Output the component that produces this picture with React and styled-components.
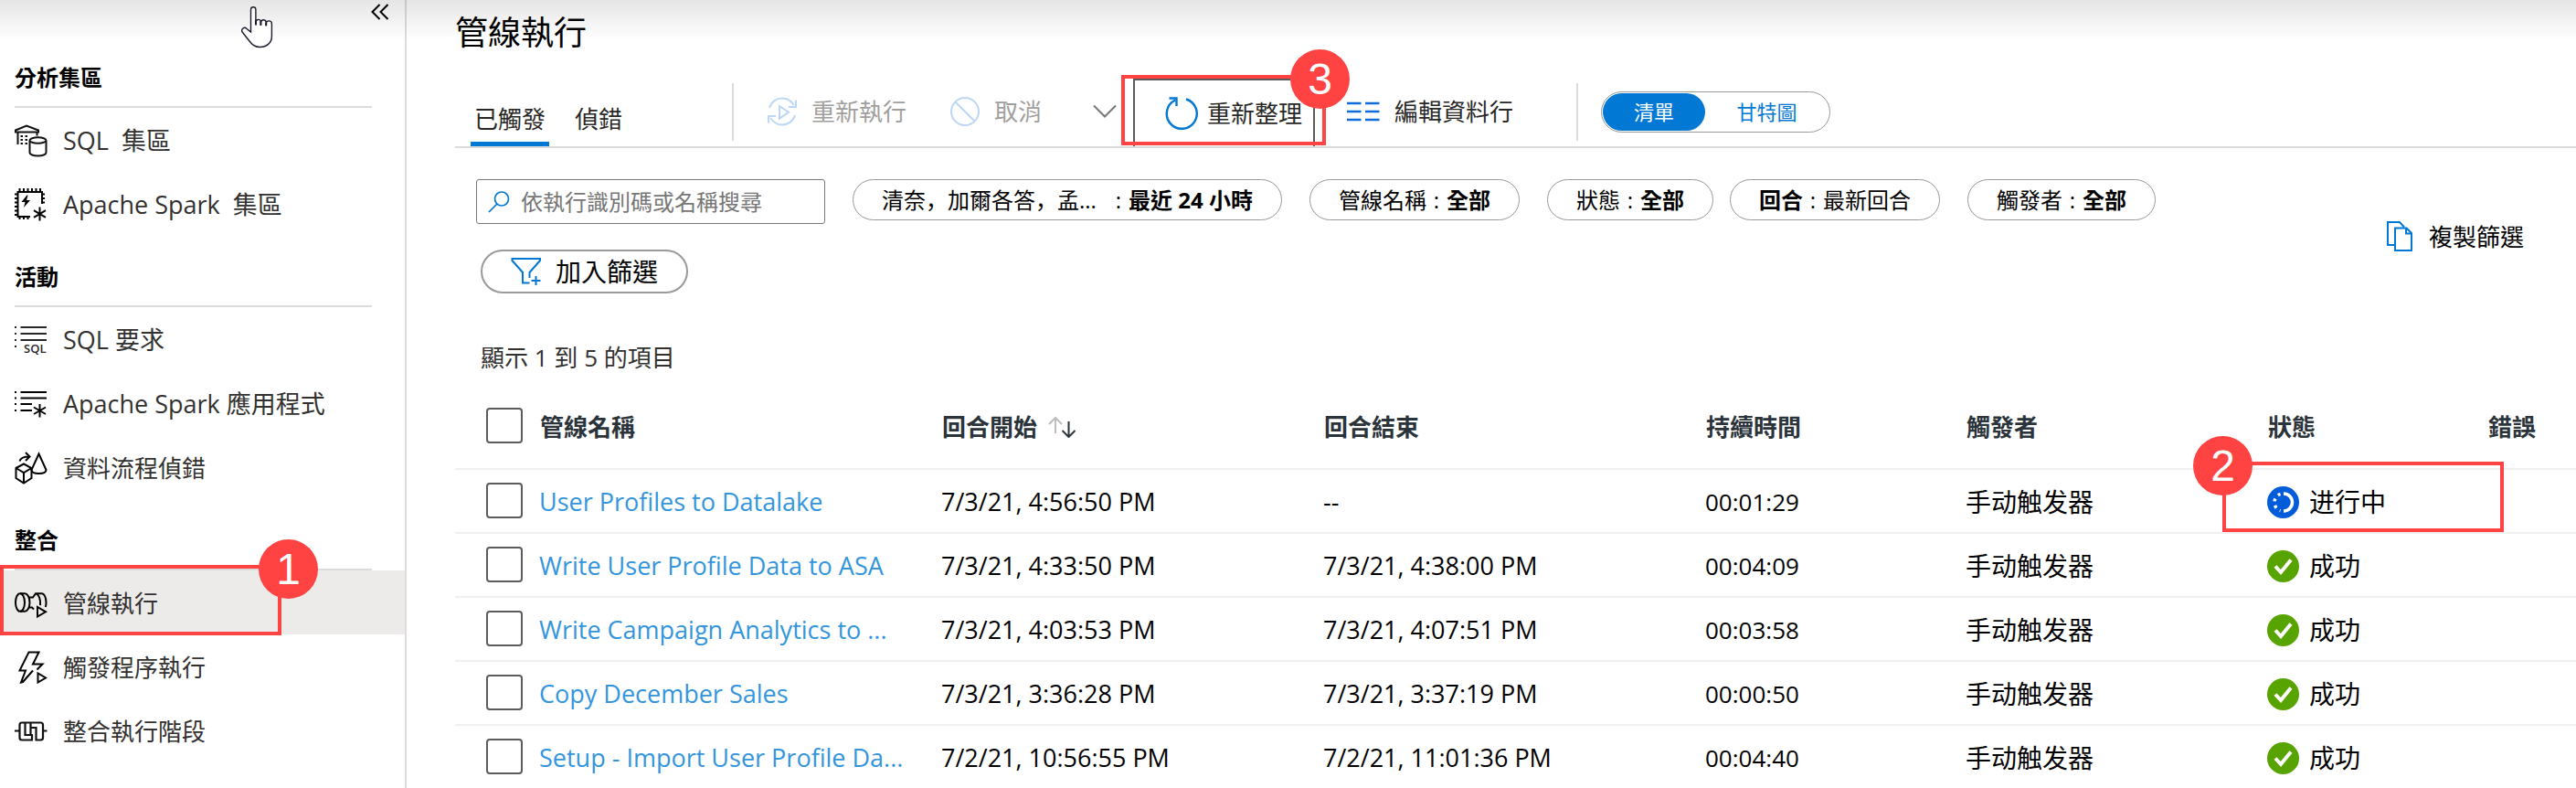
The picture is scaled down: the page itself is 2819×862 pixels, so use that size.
import React from "react";
import styled, { createGlobalStyle, css } from "styled-components";

const GlobalStyle = createGlobalStyle`
  *, *::before, *::after { box-sizing: border-box; }
  body {
    margin: 0;
    background: #fff;
    color: #000;
    font-family: "Open Sans", "Noto Sans CJK TC", sans-serif;
    font-size: 26px;
    line-height: 34px;
  }
  button, input { font: inherit; color: inherit; }
  button { padding: 0; border: 0; background: none; cursor: pointer; white-space: nowrap; }
  a { text-decoration: none; }
  svg { display: block; flex: none; }
`;

const Page = styled.div`
  position: relative;
  display: flex;
  height: 100vh;
  overflow: hidden;
`;

const TopShade = styled.div`
  position: absolute;
  inset: 0 0 auto 0;
  height: 44px;
  background: linear-gradient(rgba(0, 0, 0, 0.1), rgba(0, 0, 0, 0));
  pointer-events: none;
`;

const Pointer = styled.svg`
  position: absolute;
  left: 264px;
  top: 5px;
  pointer-events: none;
`;

/* Sidebar */

const Sidebar = styled.nav`
  flex: none;
  width: 445px;
  border-right: 2px solid #dcdcdc;
`;

const SidebarTop = styled.div`
  display: flex;
  justify-content: flex-end;
  align-items: flex-start;
  height: 40px;
  padding: 4px 17px 0 0;
`;

const SectionTitle = styled.h2`
  margin: 0 36px 0 16px;
  padding: 28px 0 14px;
  border-bottom: 2px solid #dcdcdc;
  font-size: 24px;
  line-height: 34px;
  font-weight: 700;
`;

const NavList = styled.ul`
  margin: 0;
  padding: 0;
  list-style: none;
`;

const NavItem = styled.li`
  position: relative;
`;

const NavLink = styled.a`
  display: flex;
  align-items: center;
  gap: 17px;
  height: 70px;
  padding: 2px 0 0 16px;
  color: #323130;
  font-size: ${(p) => (p.$latin ? 27 : 26)}px;
  white-space: pre;
  background: ${(p) => (p.$active ? "#edebe9" : "transparent")};
`;

/* Numbered callouts */

const Callout = styled.div`
  position: absolute;
  z-index: 2;
  height: 77px;
  border: 4px solid #ff4343;
  pointer-events: none;
  ${(p) => p.$box}
`;

const badgeSides = {
  left: "left: -36px;",
  right: "right: -44px;",
  corner: "right: -30px;",
};

const Badge = styled.span`
  position: absolute;
  top: -32px;
  ${(p) => badgeSides[p.$side]}
  width: 65px;
  height: 65px;
  border-radius: 50%;
  background: #ff4343;
  color: #fff;
  font-family: "Liberation Sans", sans-serif;
  font-size: 48px;
  font-weight: 400;
  line-height: 65px;
  text-align: center;
`;

/* Main column */

const Main = styled.main`
  flex: 1;
  min-width: 0;
  padding-left: 53px;
`;

const Title = styled.h1`
  margin: 0;
  padding-top: 14px;
  font-size: 36px;
  line-height: 44px;
  font-weight: 400;
`;

const Toolbar = styled.div`
  display: flex;
  align-items: center;
  height: 78px;
  margin-top: 26px;
  border-bottom: 2px solid #dcdcdc;
`;

const Tabs = styled.div`
  display: flex;
  align-self: flex-end;
  gap: 24px;
  width: 303px;
  padding-left: 17px;
`;

const Tab = styled.button`
  height: 56px;
  padding: 0 4px;
  border-bottom: 5px solid ${(p) => (p.$active ? "#0078d4" : "transparent")};
  color: #292827;
  line-height: 46px;
`;

const Separator = styled.span`
  flex: none;
  width: 2px;
  height: 63px;
  background: #dcdcdc;
`;

const ToolGroup = styled.div`
  display: flex;
  align-items: center;
  gap: ${(p) => p.$gap}px;
  padding: 0 ${(p) => p.$right}px 0 ${(p) => p.$left}px;
`;

const ToolButton = styled.button`
  display: flex;
  align-items: center;
  gap: 16px;
  color: #292827;
  &:disabled { color: #a19f9d; cursor: default; }
`;

const RefreshWrap = styled.div`
  position: relative;
  align-self: stretch;
  margin-left: 18px;
  padding-top: 2px;
`;

const RefreshButton = styled(ToolButton)`
  gap: 10px;
  height: 100%;
  padding: 0 12px 0 33px;
  border: 2px solid #5c5c5c;
  border-bottom: 0;
`;

const Switcher = styled.div`
  display: flex;
  width: 251px;
  height: 45px;
  margin-left: 25px;
  padding: 1px;
  border: 1px solid #999;
  border-radius: 23px;
  color: #0078d4;
  font-size: 22px;
`;

const SwitchOption = styled.button`
  flex: ${(p) => (p.$active ? "0 0 112px" : "1")};
  border-radius: 21px;
  ${(p) => p.$active && css`
    background: #0078d4;
    color: #fff;
  `}
`;

const Filters = styled.section`
  display: flex;
  align-items: center;
  justify-content: space-between;
  padding: 34px 57px 0 23px;
`;

const FilterRows = styled.div`
  display: flex;
  flex-direction: column;
  align-items: flex-start;
  gap: 28px;
`;

const FilterRow = styled.div`
  display: flex;
  align-items: flex-start;
  gap: ${(p) => p.$gap || 30}px;
`;

const SearchBox = styled.label`
  display: flex;
  align-items: center;
  gap: 12px;
  width: 382px;
  height: 49px;
  padding: 0 12px;
  border: 1px solid #767676;
  border-radius: 3px;
`;

const SearchInput = styled.input`
  flex: 1;
  min-width: 0;
  padding: 0;
  border: 0;
  outline: 0;
  background: transparent;
  font-size: 24px;
  &::placeholder { color: #767676; opacity: 1; }
`;

const Pill = styled.button`
  display: flex;
  align-items: center;
  height: 45px;
  padding: 0 31px;
  border: 1px solid #999;
  border-radius: 23px;
  font-size: 24px;
`;

const PillText = styled.span`
  font-weight: ${(p) => (p.$bold ? 700 : 400)};
`;

const PillLocations = styled(PillText)`
  width: 248px;
  font-family: "Open Sans", "Noto Sans CJK SC", sans-serif;
  text-align: left;
`;

const Colon = styled.span`
  width: 22px;
  text-align: center;
`;

const AddFilter = styled.button`
  display: flex;
  align-items: center;
  gap: 15px;
  height: 48px;
  margin-left: 5px;
  padding: 0 31px;
  border: 2px solid #999;
  border-radius: 24px;
  font-size: 28px;
`;

const CopyFilters = styled(ToolButton)`
  gap: 18px;
  color: #000;
`;

const Count = styled.p`
  margin: 53px 0 12px;
  padding-left: 28px;
  color: #323130;
`;

/* Runs table */

const Table = styled.table`
  width: 100%;
  table-layout: fixed;
  border-collapse: separate;
  border-spacing: 0;
`;

const Col = styled.col`
  width: ${(p) => (p.$w ? `${p.$w}px` : "auto")};
`;

const Th = styled.th`
  height: 94px;
  padding: ${(p) => (p.$check ? "0 0 2px 34px" : "2px 0 0 1px")};
  border-bottom: 2px solid #f0f0f0;
  color: #2b333b;
  font-weight: 700;
  text-align: left;
  white-space: nowrap;
`;

const Td = styled.td`
  position: relative;
  height: 70px;
  padding: ${(p) => (p.$check ? "0 0 2px 34px" : "2px 0 0")};
  border-bottom: 2px solid #f0f0f0;
  font-size: ${(p) => (p.$compact ? 26 : 27)}px;
  white-space: nowrap;
`;

const TriggerTd = styled(Td)`
  font-family: "Open Sans", "Noto Sans CJK SC", sans-serif;
  font-size: 28px;
`;

const HeadInner = styled.span`
  display: flex;
  align-items: center;
  gap: 12px;
`;

const Status = styled.span`
  display: flex;
  align-items: center;
  gap: 11px;
`;

const Check = styled.input`
  appearance: none;
  display: block;
  width: 40px;
  height: 39px;
  margin: 0;
  border: 2px solid #5c5c5c;
  border-radius: 4px;
  background: #fff;
`;

const RunLink = styled.a`
  color: #3395dd;
`;

/* Icons */

const Svg = ({ w = 36, h = 36, box, color = "#111", sw = 2, children }) => (
  <svg width={w} height={h} viewBox={box || `0 0 ${w} ${h}`} fill="none" stroke={color} strokeWidth={sw} aria-hidden="true">
    {children}
  </svg>
);

const icons = {
  sqlPool: (
    <Svg>
      <path d="M1 8.500V6.500L13 1.500l13 5v2zM3.500 8.500V22M24.500 8.500v4" />
      <path d="M6.500 13h2.500M11.500 13H14M6.500 17h2.500M11.500 17H14M6.500 21h2.500M11.500 21H14" strokeWidth="2.200" />
      <path d="M16.500 18v13c0 2 4 3.500 9 3.500s9-1.500 9-3.500V18" fill="#fff" />
      <ellipse cx="25.500" cy="17.500" rx="9" ry="3.200" fill="#fff" />
    </Svg>
  ),
  sparkPool: (
    <Svg color="#000">
      <path d="M17 31H3.500V4H30v13" />
      <path d="M5.500 0v4M10 0v4M14.500 0v4M19 0v4M23.500 0v4M28 0v4M30 6.500h3M30 11h3M30 15.500h3M0 6.500h3M0 11h3M0 15.500h3M0 20h3M0 24.500h3M0 29h3M5.500 31v3M10 31v3M14.500 31v3" />
      <path d="M13.500 7.500L7.500 15h4l-1.500 6 7-8h-4l1.500-5.500z" fill="#000" stroke="none" />
      <path d="M27.500 20.500v15M21 24.200l13 7.600M21 31.800l13-7.600" />
    </Svg>
  ),
  sqlRequests: (
    <Svg color="#292827">
      <path d="M0 4h2M0 11h2M0 18h2M0 25h2M6.500 4H35M6.500 11H35M6.500 18H35" />
      <text x="10" y="31.500" fontSize="13" fontWeight="600" fontFamily="Open Sans, sans-serif" fill="#292827" stroke="none">SQL</text>
    </Svg>
  ),
  sparkApps: (
    <Svg color="#000">
      <path d="M0 5h2M0 11.500h2M0 18h2M0 25h2M6.500 5H35M6.500 11.500H35M6.500 18H19M6.500 25H19" />
      <path d="M27.500 18v14.500M21 21.500l13 7.500M21 29l13-7.500" />
    </Svg>
  ),
  dataFlow: (
    <Svg color="#000">
      <path d="M1.500 18l8.500-4.500 8.500 4.500v11L10 34.500 1.500 29zM1.500 18l8.500 5 8.500-5M10 23v11" />
      <path d="M26.500 2.500L34.500 20c0 2.500-3.500 4-8 4s-8-1.500-8-4z" />
      <path d="M5.500 10.500C6.500 6.500 10 5.500 16 5.500M12 1l4.500 4.500L12 10" />
    </Svg>
  ),
  pipelineRuns: (
    <Svg color="#000">
      <ellipse cx="6" cy="17" rx="5" ry="9.800" />
      <path d="M6 7.200h5c3 0 5.500 4 5.500 9.800s-2.500 9.800-5.500 9.800H6" />
      <path d="M15.500 11.500H20l3-4.300h6.500c3 0 5 4.500 5 9.800 0 1.800-.2 3.500-.7 5M15.500 22.500H19l2 2M23.500 7.200c3.500 2 5 7 4.500 13" />
      <path d="M25 22v10.500l9-5.200z" />
    </Svg>
  ),
  triggerRuns: (
    <Svg color="#000">
      <path d="M20 21.500L9 34l-2 .5 5-13H5.500L15.500 1.500h11l-6.500 13h10.500l-6 6" />
      <path d="M25.500 24.500v10l8.500-5z" />
    </Svg>
  ),
  runtimes: (
    <Svg color="#111" sw={2.200}>
      <path d="M0 17.500h5M31 17.500h4.500" />
      <path d="M17.500 8.500H8Q5.500 8.500 5.500 11v14q0 2.500 2.500 2.500h11V22H11.500V8.500M17.500 8.500h11Q31 8.500 31 11v14q0 2.500-2.500 2.500H23.500V14H17.500v8M17.500 8.500V14" />
    </Svg>
  ),
  rerun: (
    <Svg w={32} h={32} color="#bcd6f5">
      <path d="M2 12C4 5 10 1.500 16 1.500c5 0 9.500 2.500 13 7.500M31 3.500V11h-8M30 20c-2 7-8 10.500-14 10.500-5 0-9.500-2.500-13-7.500M1 28.500V21h8" />
      <path d="M13 10v13.500l10-6.800z" />
    </Svg>
  ),
  cancel: (
    <Svg w={32} h={32} color="#bcd6f5">
      <circle cx="16" cy="16" r="15" />
      <path d="M5.500 5.500l21 21" />
    </Svg>
  ),
  chevron: (
    <Svg w={26} h={16} color="#777">
      <path d="M1 1.500l12 12 12-12" />
    </Svg>
  ),
  refresh: (
    <Svg color="#0078d4" sw={2.400}>
      <path d="M23 2.500A16.500 16.500 0 1 1 11 3.500M4.500 1.500H12.500V10" />
    </Svg>
  ),
  columns: (
    <Svg w={36} h={24} color="#0f6cda" sw={2.600}>
      <path d="M0 3h15.500M20 3h15.500M0 12h15.500M20 12h15.500M0 21h15.500M20 21h15.500" />
    </Svg>
  ),
  search: (
    <Svg w={24} h={24} color="#0078d4" sw={1.700}>
      <circle cx="15" cy="8.500" r="7.500" />
      <path d="M10 14L1 23" />
    </Svg>
  ),
  addFilter: (
    <Svg w={34} h={32} color="#0078d4">
      <path d="M20.500 28.500H13V17L1.500 4V2H32v2L20.500 17v6" />
      <path d="M27.500 21v10M22.500 26h10" />
    </Svg>
  ),
  copy: (
    <Svg w={28} h={33} color="#0078d4">
      <path d="M9 26H1V1h13l5 5.500" />
      <path d="M9 7.500h12.500L27 13v19H9zM21 7.500v6h6" />
    </Svg>
  ),
  sort: (
    <Svg w={32} h={24} color="#2b333b">
      <path d="M8 19V2M1 9l7-7 7 7" stroke="#bdbdbd" />
      <path d="M22.500 6v17M15.500 16l7 7 7-7" />
    </Svg>
  ),
  collapse: (
    <Svg w={20} h={18} color="#000">
      <path d="M9.500 1L1.500 9l8 8M18.500 1l-8 8 8 8" />
    </Svg>
  ),
  running: (
    <Svg w={35} h={35} color="#fff" sw={3.500}>
      <circle cx="17.500" cy="17.500" r="17.500" fill="#015cda" stroke="none" />
      <path d="M18 8a9.500 9.500 0 0 1 0 19" />
      <path d="M14.500 8.400A9.500 9.500 0 0 0 8 17.500a9.500 9.500 0 0 0 6.500 9.100" strokeDasharray="3 4.600" />
    </Svg>
  ),
  success: (
    <Svg w={35} h={35} color="#fff" sw={4}>
      <circle cx="17.500" cy="17.500" r="17.500" fill="#57a300" stroke="none" />
      <path d="M9 17.500l6 6.500L26 10.500" />
    </Svg>
  ),
};

const sections = [
  { title: "分析集區", items: [["sqlPool", "SQL  集區"], ["sparkPool", "Apache Spark  集區"]] },
  { title: "活動", items: [["sqlRequests", "SQL 要求"], ["sparkApps", "Apache Spark 應用程式"], ["dataFlow", "資料流程偵錯"]] },
  { title: "整合", items: [["pipelineRuns", "管線執行"], ["triggerRuns", "觸發程序執行"], ["runtimes", "整合執行階段"]] },
];

const runs = [
  ["User Profiles to Datalake", "7/3/21, 4:56:50 PM", "--", "00:01:29", "running"],
  ["Write User Profile Data to ASA", "7/3/21, 4:33:50 PM", "7/3/21, 4:38:00 PM", "00:04:09", "success"],
  ["Write Campaign Analytics to ...", "7/3/21, 4:03:53 PM", "7/3/21, 4:07:51 PM", "00:03:58", "success"],
  ["Copy December Sales", "7/3/21, 3:36:28 PM", "7/3/21, 3:37:19 PM", "00:00:50", "success"],
  ["Setup - Import User Profile Da...", "7/2/21, 10:56:55 PM", "7/2/21, 11:01:36 PM", "00:04:40", "success"],
];

const FilterPill = ({ label, value, boldLabel }) => (
  <Pill type="button">
    <PillText $bold={boldLabel}>{label}</PillText>
    <Colon>:</Colon>
    <PillText $bold={!boldLabel}>{value}</PillText>
  </Pill>
);

export default function App() {
  return (
    <Page>
      <GlobalStyle />
      <Sidebar aria-label="監視">
        <SidebarTop>
          <button type="button" aria-label="摺疊">{icons.collapse}</button>
        </SidebarTop>
        {sections.map((s) => (
          <section key={s.title}>
            <SectionTitle>{s.title}</SectionTitle>
            <NavList>
              {s.items.map(([icon, label]) => {
                const active = icon === "pipelineRuns";
                return (
                  <NavItem key={label}>
                    <NavLink
                      href="#"
                      $active={active}
                      $latin={/^[A-Z]/.test(label)}
                      aria-current={active ? "page" : undefined}
                    >
                      {icons[icon]}
                      {label}
                    </NavLink>
                    {active && (
                      <Callout $box={css`left: 0; top: -6px; width: 308px;`}>
                        <Badge $side="right">1</Badge>
                      </Callout>
                    )}
                  </NavItem>
                );
              })}
            </NavList>
          </section>
        ))}
      </Sidebar>

      <Main>
        <Title>管線執行</Title>
        <Toolbar>
          <Tabs role="tablist">
            <Tab type="button" role="tab" aria-selected="true" $active>已觸發</Tab>
            <Tab type="button" role="tab" aria-selected="false">偵錯</Tab>
          </Tabs>
          <Separator />
          <ToolGroup $gap={48} $left={37} $right={56}>
            <ToolButton type="button" disabled>{icons.rerun}重新執行</ToolButton>
            <ToolButton type="button" disabled>{icons.cancel}取消</ToolButton>
          </ToolGroup>
          <ToolButton type="button" aria-label="更多取消選項">{icons.chevron}</ToolButton>
          <RefreshWrap>
            <RefreshButton type="button">{icons.refresh}重新整理</RefreshButton>
            <Callout $box={css`right: -12px; top: -2px; width: 224px;`}>
              <Badge $side="corner">3</Badge>
            </Callout>
          </RefreshWrap>
          <ToolGroup $gap={0} $left={35} $right={69}>
            <ToolButton type="button">{icons.columns}編輯資料行</ToolButton>
          </ToolGroup>
          <Separator />
          <Switcher>
            <SwitchOption type="button" $active aria-pressed="true">清單</SwitchOption>
            <SwitchOption type="button" aria-pressed="false">甘特圖</SwitchOption>
          </Switcher>
        </Toolbar>

        <Filters>
          <FilterRows>
            <FilterRow>
              <SearchBox>
                {icons.search}
                <SearchInput type="text" aria-label="搜尋" placeholder="依執行識別碼或名稱搜尋" />
              </SearchBox>
              <Pill type="button">
                <PillLocations>清奈，加爾各答，孟...</PillLocations>
                <Colon>:</Colon>
                <PillText $bold>最近 24 小時</PillText>
              </Pill>
              <FilterPill label="管線名稱" value="全部" />
              <FilterRow $gap={18}>
                <FilterPill label="狀態" value="全部" />
                <FilterPill label="回合" value="最新回合" boldLabel />
              </FilterRow>
              <FilterPill label="觸發者" value="全部" />
            </FilterRow>
            <AddFilter type="button">{icons.addFilter}加入篩選</AddFilter>
          </FilterRows>
          <CopyFilters type="button">{icons.copy}複製篩選</CopyFilters>
        </Filters>

        <Count>顯示 1 到 5 的項目</Count>

        <Table>
          <colgroup>
            {[92, 440, 418, 418, 285, 330, 241, 0].map((w, i) => <Col key={i} $w={w} />)}
          </colgroup>
          <thead>
            <tr>
              <Th $check><Check type="checkbox" aria-label="全選" /></Th>
              <Th>管線名稱</Th>
              <Th><HeadInner>回合開始{icons.sort}</HeadInner></Th>
              <Th>回合結束</Th>
              <Th>持續時間</Th>
              <Th>觸發者</Th>
              <Th>狀態</Th>
              <Th>錯誤</Th>
            </tr>
          </thead>
          <tbody>
            {runs.map(([name, start, end, duration, state]) => (
              <tr key={name}>
                <Td $check><Check type="checkbox" aria-label={name} /></Td>
                <Td><RunLink href="#">{name}</RunLink></Td>
                <Td>{start}</Td>
                <Td>{end}</Td>
                <Td $compact>{duration}</Td>
                <TriggerTd lang="zh-Hans">手动触发器</TriggerTd>
                <TriggerTd lang="zh-Hans">
                  <Status>
                    {icons[state]}
                    {state === "running" ? "进行中" : "成功"}
                  </Status>
                  {state === "running" && (
                    <Callout $box={css`left: -49px; top: -9px; width: 308px;`}>
                      <Badge $side="left">2</Badge>
                    </Callout>
                  )}
                </TriggerTd>
                <Td />
              </tr>
            ))}
          </tbody>
        </Table>
      </Main>

      <TopShade />
      <Pointer width="36" height="48" viewBox="0 0 36 48" fill="#fff" stroke="#1b1b2b" strokeWidth="1.400" aria-hidden="true">
        <path d="M10.500 30V5.500a2.700 2.700 0 0 1 5.400 0V16q0 4 0 6v-3.500a3 3 0 0 1 5.500-.5v5V19a3 3 0 0 1 5.800 0v4.500-2.500a3 3 0 0 1 6.200 0V35c0 7-6 11.500-13 11.500-5 0-8-2-11-6L1.500 30.500a3 3 0 0 1 4.500-4z" />
        <path d="M16 17v5.500M21.400 18v4.500M27.200 19.500v3.500" strokeWidth="2" />
      </Pointer>
    </Page>
  );
}
